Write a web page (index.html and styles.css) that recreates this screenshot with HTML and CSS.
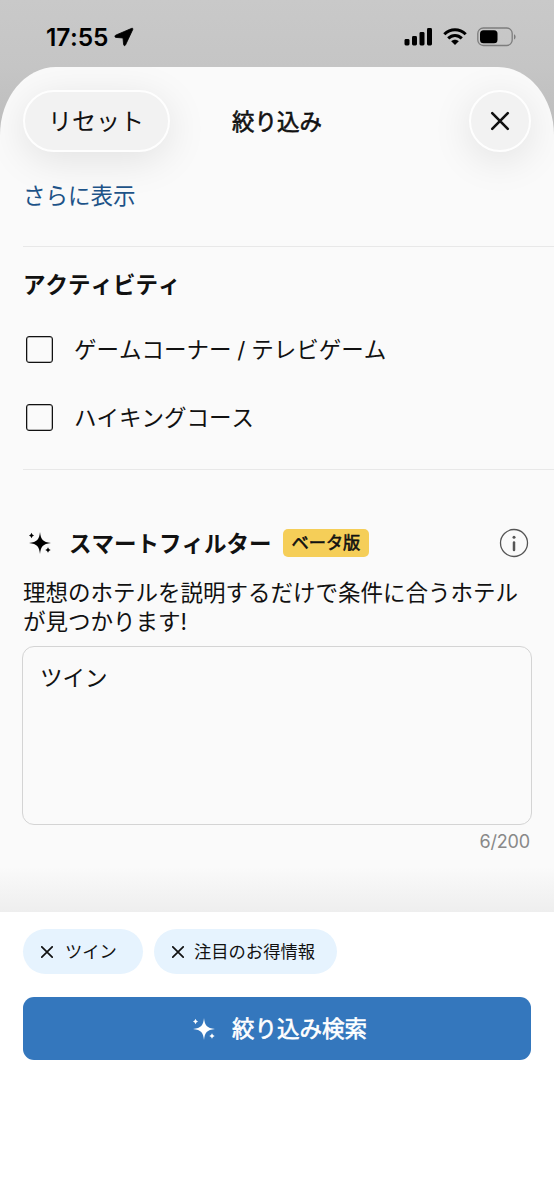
FILE: index.html
```html
<!DOCTYPE html>
<html lang="ja">
<head>
<meta charset="utf-8">
<title>絞り込み</title>
<link rel="stylesheet" href="styles.css">
</head>
<body>
<div class="screen">
  <div class="status">
    <span class="time">17:55</span>
    <svg class="location" width="20" height="20" viewBox="0 0 20 20"><path d="M17.800 1.300 1.600 8.200C.6 8.800.8 10.300 1.800 10.400L9 11 9.600 17.600C9.800 18.900 11 18.900 11.500 18L18.800 2.400C19 1.500 18.500 1 17.800 1.300Z"/></svg>
    <svg class="signal" width="29" height="20" viewBox="0 0 29 20"><rect x=".5" y="12" width="5" height="6.500" rx="1.400"/><rect x="8" y="9" width="5" height="9.500" rx="1.400"/><rect x="15.500" y="5" width="5" height="13.500" rx="1.400"/><rect x="23" y="1" width="5" height="17.500" rx="1.400"/></svg>
    <svg class="wifi" width="24" height="18" viewBox="0 0 24 18"><g fill="none" stroke="#000" stroke-width="3"><path d="M1.300 6.300C7.500.2 16.500.2 22.700 6.300"/><path d="M5.200 10.400C9.200 6.500 14.800 6.500 18.800 10.400"/></g><path d="M8.200 13.300C10.500 11.300 13.500 11.300 15.800 13.300L12 17Z"/></svg>
    <svg class="battery" width="40" height="20" viewBox="0 0 40 20"><rect x=".8" y="1" width="34.400" height="17.500" rx="5.500" fill="none" stroke="#7d7d7d" stroke-width="1.300"/><rect x="3" y="3.300" width="17.500" height="13" rx="3.500"/><path d="M37 7.200C39.100 8.200 39.100 11.500 37 12.500Z" fill="#7d7d7d"/></svg>
  </div>
  <main class="sheet">
    <header class="header">
      <button class="glass reset">リセット</button>
      <h1 class="title medium">絞り込み</h1>
      <button class="glass close" aria-label="閉じる"><svg width="20" height="20" viewBox="0 0 20 20"><path d="M2.200 2.200 17.800 17.800M17.800 2.200 2.200 17.800"/></svg></button>
    </header>
    <a class="more">さらに表示</a>
    <section class="activity">
      <h2 class="heading">アクティビティ</h2>
      <label class="option"><span class="box"></span><span class="label">ゲームコーナー / テレビゲーム</span></label>
      <label class="option"><span class="box"></span><span class="label">ハイキングコース</span></label>
    </section>
    <section class="smart">
      <div class="smart-head">
        <svg class="sparkle" width="24" height="24" viewBox="0 0 24 24"><path d="M12 1C12.800 8.500 14.800 11.100 23 12C14.800 12.900 12.800 15.500 12 23C11.200 15.500 9.200 12.900 1 12C9.200 11.100 11.200 8.500 12 1ZM3.500 1.700Q4 4 6 4.500Q4 5 3.500 7.300Q3 5 1 4.500Q3 4 3.500 1.700ZM20 16.300Q20.500 18.500 22.700 19Q20.500 19.500 20 21.700Q19.500 19.500 17.300 19Q19.500 18.500 20 16.300Z"/></svg>
        <h2 class="heading">スマートフィルター</h2>
        <span class="beta medium">ベータ版</span>
        <svg class="info" width="30" height="30" viewBox="0 0 30 30"><circle cx="15" cy="15" r="13.500"/><path d="M15 14.500V22"/><circle class="dot" cx="15" cy="9.300" r="1.500"/></svg>
      </div>
      <p class="desc">理想のホテルを説明するだけで条件に合うホテル<br>が見つかります!</p>
      <div class="textarea">ツイン</div>
      <div class="count">6/200</div>
    </section>
  </main>
  <footer class="footer">
    <div class="chips">
      <span class="chip chip-twin"><svg width="12" height="12" viewBox="0 0 12 12"><path d="M.8.8 11.200 11.200M11.200.8.8 11.200"/></svg><span class="label">ツイン</span></span>
      <span class="chip"><svg width="12" height="12" viewBox="0 0 12 12"><path d="M.8.8 11.200 11.200M11.200.8.8 11.200"/></svg><span class="label">注目のお得情報</span></span>
    </div>
    <button class="search"><svg class="sparkle" width="24" height="24" viewBox="0 0 24 24"><path d="M12 1C12.800 8.500 14.800 11.100 23 12C14.800 12.900 12.800 15.500 12 23C11.200 15.500 9.200 12.900 1 12C9.200 11.100 11.200 8.500 12 1ZM3.500 1.700Q4 4 6 4.500Q4 5 3.500 7.300Q3 5 1 4.500Q3 4 3.500 1.700ZM20 16.300Q20.500 18.500 22.700 19Q20.500 19.500 20 21.700Q19.500 19.500 17.300 19Q19.500 18.500 20 16.300Z"/></svg><span class="label medium">絞り込み検索</span></button>
  </footer>
</div>
</body>
</html>
```
FILE: styles.css
```css
* { box-sizing: border-box; }
body { margin: 0; background: #fff; color: #111; font-family: Inter, "Noto Sans CJK JP", sans-serif; font-size: 22.5px; font-kerning: none; }
h1, h2, p { margin: 0; }
button { border: 0; padding: 0; font: inherit; font-kerning: none; color: inherit; }
svg { display: block; flex: none; }
.medium { font-weight: 400; -webkit-text-stroke: .6px currentColor; }
.label { padding-bottom: 3px; }
.screen { width: 554px; height: 1199px; overflow: hidden; display: flex; flex-direction: column; background: linear-gradient(#c9c9c9, #c5c5c5 67px, #bdbdbd 130px); }

.status { height: 67px; flex: none; display: flex; align-items: center; padding: 7px 37px 0 46px; color: #000; }
.time { width: 62px; font-size: 24.500px; font-weight: 600; letter-spacing: -.2px; white-space: nowrap; }
.location { margin-left: 6px; stroke: #000; stroke-width: .8; stroke-linejoin: round; }
.signal { margin-left: auto; }
.wifi { margin-left: 10px; }
.battery { margin-left: 10px; }

.sheet { height: 845px; flex: none; overflow: hidden; border-radius: 56px 56px 0 0 / 68px 68px 0 0; background: linear-gradient(#fafafa 0 800px, #eee); }
.header { height: 85px; padding: 23px 23px 0; display: grid; grid-template-columns: 147px 1fr 147px; align-items: center; }
.glass { height: 62px; border: 2px solid #fefefe; border-radius: 31px; background: #f2f2f2; box-shadow: 0 8px 40px rgba(0, 0, 0, .1); }
.reset { width: 147px; padding: 0 1px 4px 0; font-size: 24px; white-space: nowrap; }
.close { width: 62px; justify-self: end; display: grid; place-items: center; }
.close path { fill: none; stroke: #111; stroke-width: 2.600; stroke-linecap: round; }
.title { padding-top: 1px; text-align: center; font-size: 22.500px; line-height: 32px; }
.more { display: block; height: 94px; padding: 28px 23px 0; line-height: 32px; color: #1d5388; }

.activity { height: 224px; margin-left: 23px; border: solid #e8e8e8; border-width: 1px 0; }
.heading { font-size: 22.500px; line-height: 32px; font-weight: 700; white-space: nowrap; }
.activity .heading { padding-top: 22px; margin-bottom: 14px; }
.option { height: 68px; display: flex; align-items: center; gap: 21px; padding-left: 3px; white-space: nowrap; word-spacing: -.5px; }
.box { width: 27px; height: 27px; border: 1px solid #111; border-radius: 3px; box-shadow: inset 0 0 0 .5px #777; }

.smart { padding: 56px 22px 0; }
.smart-head { height: 34px; display: flex; align-items: center; padding: 0 3px 0 6px; }
.smart-head .heading { margin: 1px 0 0 17px; }
.beta { height: 28px; margin-left: 11.500px; padding: 0 8.500px; border-radius: 5px; background: #f5ce58; font-size: 17.200px; line-height: 27px; white-space: nowrap; }
.info { margin-left: auto; fill: none; stroke: #555; stroke-width: 1.300; }
.info path { stroke-width: 2.500; stroke-linecap: round; }
.info .dot { fill: #555; stroke: none; }
.desc { margin: 18px 0 10px 1px; line-height: 29px; white-space: nowrap; }
.textarea { height: 179px; padding: 15px 17px; border: 1.500px solid #d4d4d4; border-radius: 12px; line-height: 32px; }
.count { margin-top: 5px; padding-right: 2px; text-align: right; font-size: 18px; letter-spacing: -.15px; line-height: 24px; color: #888; }

.footer { flex: 1; padding: 17px 23px 0; background: #fff; }
.chips { display: flex; gap: 11px; }
.chip { height: 45px; display: flex; align-items: center; gap: 10px; padding: 0 22px 0 18px; border-radius: 22.500px; background: #e6f3fe; font-size: 17.300px; white-space: nowrap; }
.chip-twin { width: 120px; gap: 12px; }
.chip path { stroke: #111; stroke-width: 1.700; stroke-linecap: round; }
.search { width: 508px; height: 63px; margin-top: 23px; padding-left: 5px; display: flex; align-items: center; justify-content: center; gap: 16px; border-radius: 11px; background: #3477bd; color: #fff; white-space: nowrap; }
.search .sparkle { fill: #fff; }
```
